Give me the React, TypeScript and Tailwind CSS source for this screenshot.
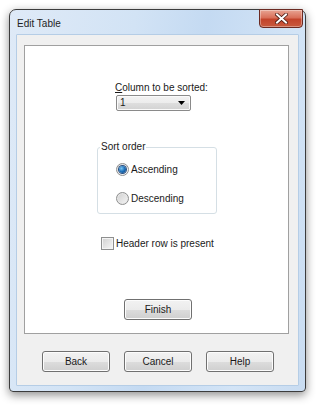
export default function App() {
  const font = { fontFamily: '"Liberation Sans", Arial, sans-serif' }

  const Btn = ({ label, className = "" }: { label: string; className?: string }) => (
    <div
      className={
        "flex h-[21px] w-[68px] items-center justify-center rounded-[3px] border border-[#707070] bg-[linear-gradient(#f2f2f2_0%,#ebebeb_50%,#dddddd_51%,#cfcfcf_100%)] text-[10px] text-[#1a1a1a] shadow-[inset_0_0_0_1px_#fcfcfc] " +
        className
      }
    >
      {label}
    </div>
  )

  return (
    <div className="h-[407px] w-[320px] bg-white pl-[9px] pt-[9px]" style={font}>
      {/* window */}
      <div className="relative flex h-[383px] w-[297px] flex-col rounded-t-[7px] rounded-b-[4px] border border-[#3c3c3c] bg-[linear-gradient(100deg,#dfeaf7_0%,#d2e3f5_35%,#c4daf2_55%,#d3e4f6_80%,#c9dcf1_100%)] shadow-[0_3px_10px_rgba(0,0,0,0.45)]">
        {/* title bar */}
        <div className="flex h-[24px] items-center pl-[7px] pt-[2px] text-[10px] text-[#1e1e1e]">Edit Table</div>

        {/* close button */}
        <div className="absolute right-[2px] top-[-1px] flex h-[19px] w-[44px] items-center justify-center rounded-b-[4px] border border-[#6b2a22] bg-[linear-gradient(#e8a493_0%,#d9705a_45%,#c3442c_55%,#c85a3e_100%)] shadow-[inset_0_0_0_1px_rgba(255,255,255,0.35)]">
          <svg width="13" height="11" viewBox="0 0 13 11">
            <path d="M2 1.5 L11 9.5 M11 1.5 L2 9.5" stroke="#4a1a12" strokeWidth="3.6" strokeLinecap="square" />
            <path d="M2 1.5 L11 9.5 M11 1.5 L2 9.5" stroke="#ffffff" strokeWidth="2" strokeLinecap="square" />
          </svg>
        </div>

        {/* client */}
        <div className="mx-[6px] mb-[5px] flex flex-1 flex-col rounded-[1px] border border-[#b5cde6] bg-[#f0f0f0]">
          {/* wizard panel */}
          <div className="ml-[7px] mt-[10px] flex h-[289px] w-[265px] flex-col border border-[#a0a0a0] bg-white text-[10px] text-[#1a1a1a]">
            <div className="ml-[90px] mt-[35px] leading-[13px]">
              <span className="underline">C</span>olumn to be sorted:
            </div>
            <div className="ml-[91px] mt-[1px] flex h-[16px] w-[75px] items-center justify-between rounded-[2px] border border-[#8a8a8a] bg-[linear-gradient(#f3f3f3_0%,#ececec_50%,#dedede_51%,#d2d2d2_100%)] pl-[3px] pr-[5px] shadow-[inset_0_0_0_1px_#fafafa]">
              <span className="leading-none">1</span>
              <svg width="7" height="4" viewBox="0 0 7 4">
                <path d="M0 0 H7 L3.5 4 Z" fill="#000" />
              </svg>
            </div>

            {/* group box */}
            <div className="relative ml-[72px] mt-[36px] flex h-[67px] w-[120px] flex-col rounded-[3px] border border-[#d5dfe5]">
              <div className="absolute left-[2px] top-[-7px] bg-white px-[1px] leading-[12px]">Sort order</div>
              <div className="ml-[18px] mt-[15px] flex items-center gap-[2px] leading-[13px]">
                <div className="flex h-[13px] w-[13px] items-center justify-center rounded-full border border-[#8e8f8f] bg-[linear-gradient(135deg,#dcdcdc,#fbfbfb)]">
                  <div className="h-[7px] w-[7px] rounded-full bg-[radial-gradient(circle_at_35%_35%,#7ac5f3_0%,#1d6fb8_50%,#0b3c77_100%)] shadow-[0_0_0_1px_#2a4f80]" />
                </div>
                <span>Ascending</span>
              </div>
              <div className="ml-[18px] mt-[16px] flex items-center gap-[2px] leading-[13px]">
                <div className="h-[13px] w-[13px] rounded-full border border-[#8e8f8f] bg-[linear-gradient(135deg,#cfcfcf,#f6f6f6)] shadow-[inset_0_0_0_1px_#e8e8e8]" />
                <span>Descending</span>
              </div>
            </div>

            <div className="ml-[76px] mt-[23px] flex items-center gap-[2px] leading-[13px]">
              <div className="h-[13px] w-[13px] border border-[#8e8f8f] bg-[linear-gradient(135deg,#d0d0d0,#f7f7f7)] shadow-[inset_0_0_0_1px_#f4f4f4]" />
              <span>Header row is present</span>
            </div>

            <Btn label="Finish" className="ml-[99px] mt-[49px]" />
          </div>

          <div className="ml-[25px] mt-[17px] flex gap-[14px]">
            <Btn label="Back" />
            <Btn label="Cancel" />
            <Btn label="Help" />
          </div>
        </div>
      </div>
    </div>
  )
}
